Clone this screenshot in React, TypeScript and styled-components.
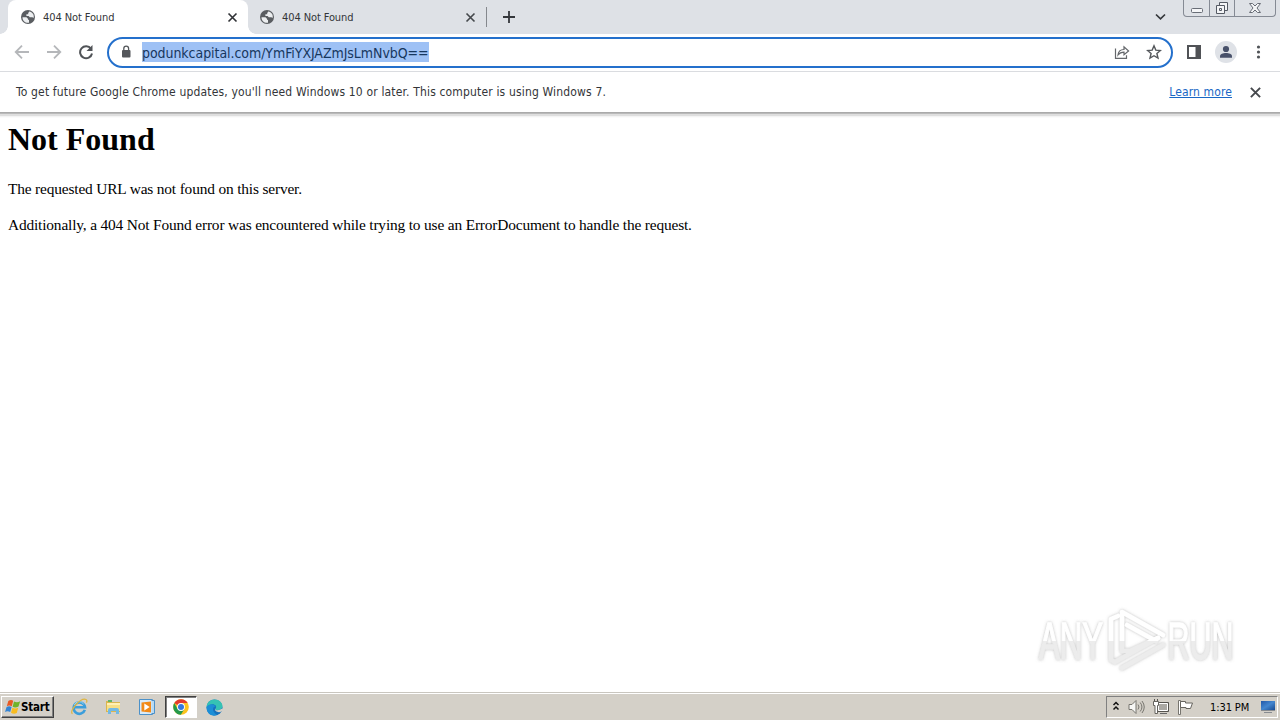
import React from "react";
import styled, { createGlobalStyle } from "styled-components";

const Global = createGlobalStyle`
  * { box-sizing: border-box; }
  body { margin: 0; background: #fff; overflow: hidden; }
  svg { display: block; flex: none; }
`;

const uiFont = `"DejaVu Sans Condensed", "DejaVu Sans", Tahoma, sans-serif`;

const Screen = styled.div`
  width: 1280px; height: 720px; display: flex; flex-direction: column;
  overflow: hidden; background: #fff; font-family: ${uiFont}; color: #3c4043;
`;

const Label = styled.span<{ $size?: number; $spacing?: number; $color?: string }>`
  font-size: ${p => p.$size ?? 12}px;
  letter-spacing: ${p => p.$spacing ?? 0}px;
  color: ${p => p.$color ?? "#333538"};
  white-space: pre;
`;

const TabStrip = styled.div`
  height: 34px; flex: none; background: #dee1e6; display: flex; padding-left: 8px;
`;
const Tab = styled.div<{ $active?: boolean }>`
  width: ${p => (p.$active ? 240 : 238)}px; height: 34px; display: flex; align-items: center;
  padding: ${p => (p.$active ? "0 9px 0 12px" : "0 9px 0 11px")}; gap: 7px; position: relative;
  background: ${p => (p.$active ? "#fff" : "transparent")};
  border-radius: 8px 8px 0 0;
  &::before, &::after {
    content: ""; display: ${p => (p.$active ? "block" : "none")};
    position: absolute; bottom: 0; width: 8px; height: 8px;
  }
  &::before { left: -8px; background: radial-gradient(circle at 0 0, transparent 7.5px, #fff 8px); }
  &::after { right: -8px; background: radial-gradient(circle at 100% 0, transparent 7.5px, #fff 8px); }
`;
const Grow = styled.div`flex: 1;`;
const Divider = styled.div`width: 1px; height: 20px; margin-top: 7px; background: #85888d;`;
const NewTab = styled.div`padding: 11px 0 0 16px;`;
const TabMenu = styled.div`padding: 13px 17px 0 0;`;
const WindowButtons = styled.div`
  display: flex; height: 17px; width: 93px; margin-right: 4px; border: 1px solid #858a94;
  border-top: 0; border-radius: 0 0 4px 4px; overflow: hidden;
`;
const WindowButton = styled.div<{ $width: number }>`
  width: ${p => p.$width}px; display: flex; justify-content: center; padding-top: 1px;
  & + & { border-left: 1px solid #858a94; }
`;

const Toolbar = styled.div`
  height: 38px; flex: none; display: flex; align-items: center; padding: 0 13px 1px 14px;
  border-bottom: 1px solid #dadce0;
`;
const NavButtons = styled.div`display: flex; gap: 16px; width: 93px;`;
const AddressBar = styled.div`
  width: 1066px; height: 31px; border: 2px solid #2470cc; border-radius: 16px;
  display: flex; align-items: center; padding: 0 9px 0 9px;
`;
const Selection = styled.div`
  margin-left: 8px; width: 287px; height: 20px; padding-top: 1px; background: #9ec1f5;
  display: flex; align-items: center;
`;
const AddressActions = styled.div`display: flex; gap: 16px;`;
const ToolbarActions = styled.div`display: flex; align-items: center; margin-left: 13px; gap: 13px;`;

const InfoBar = styled.div`
  height: 40px; flex: none; display: flex; align-items: center; padding: 0 17px 0 16px;
`;
const Link = styled.a`
  font-size: 12px; color: #1967c5; text-decoration: underline; text-underline-offset: 1px;
  margin-right: 16px; letter-spacing: 0.12px;
`;
const InfoShadow = styled.div`
  height: 6px; flex: none;
  background: linear-gradient(#aaa 0 1px, #b9b9b9 1px 2px, #dedede 2px 4px, #f3f3f3 4px 5px, #fbfbfb 5px);
`;

const Page = styled.main`
  flex: 1; padding: 3px 8px 0; color: #000;
  font-family: "Liberation Serif", "Times New Roman", serif; position: relative;
`;
const Heading = styled.h1`font-size: 32px; line-height: 36px; margin: 0 0 23px;`;
const Paragraph = styled.p`
  font-size: 15.4px; line-height: 18px; margin: 0 0 18px; letter-spacing: -0.165px;
`;
const Watermark = styled.div`position: absolute; left: 1030px; top: 482px;`;

const Taskbar = styled.footer`
  height: 28px; flex: none; background: #d4d0c8; display: flex; align-items: center;
  border-top: 1px solid #c9c6bf; box-shadow: inset 0 1px #fff; padding: 1px 2px 0 1px;
`;
const StartButton = styled.div`
  width: 53px; height: 22px; display: flex; align-items: center; gap: 0; padding-left: 2px;
  border: 1px solid; border-color: #fff #404040 #404040 #fff; box-shadow: inset -1px -1px #808080;
`;
const StartText = styled.span`font: bold 11.5px ${uiFont}; letter-spacing: -0.2px; color: #000;`;
const Launchers = styled.div`display: flex; align-items: center; margin-left: 8px;`;
const Launcher = styled.div<{ $active?: boolean }>`
  width: ${p => (p.$active ? 32 : 34)}px; height: 22px; display: flex; align-items: center; justify-content: center;
  margin-left: ${p => (p.$active ? 1 : 0)}px;
  background: ${p => (p.$active ? "#fff" : "transparent")};
  border: ${p => (p.$active ? "1px solid" : "0")}; border-color: #404040 #fff #fff #404040;
  box-shadow: ${p => (p.$active ? "inset 1px 1px #808080" : "none")};
`;
const Tray = styled.div`
  width: 172px; height: 22px; display: flex; align-items: center; padding: 0 1px 0 5px;
  border: 1px solid; border-color: #808080 #fff #fff #808080;
`;
const TrayIcons = styled.div`display: flex; align-items: center; gap: 8px; width: 98px;`;

const Globe = () => (
  <svg width="16" height="16" viewBox="0 0 16 16">
    <circle cx="8" cy="8" r="7" fill="#5a5d61" />
    <path d="M2.5 8.2h4l1.7 1.7v1.2H9v2.6C5.5 14.3 2.4 12 2.5 8.2Z" fill="#eceef0" />
    <path d="M9 2.4c2 .1 3.7 1.3 4.4 3.2.5 1.2.5 2.4.2 3.5l-1.2-.8H9.8L8.6 7H6.4V5.3h1.8V3.5H9Z" fill="#eceef0" />
  </svg>
);
const Cross = ({ size = 14, color = "#45484c" }: { size?: number; color?: string }) => (
  <svg width={size} height={size} viewBox="0 0 14 14" stroke={color} strokeWidth="1.8">
    <path d="m2.7 2.7 8.6 8.6M11.3 2.7l-8.6 8.6" />
  </svg>
);
const Arrow = ({ forward }: { forward?: boolean }) => (
  <svg width="16" height="16" viewBox="0 0 16 16" fill="none" stroke="#b5b7ba" strokeWidth="1.8">
    <path d={forward ? "M1 8h13M8 1.7 14.3 8 8 14.3" : "M15 8H2M8 1.7 1.7 8 8 14.3"} />
  </svg>
);
const Reload = () => (
  <svg width="16" height="16" viewBox="0 0 16 16">
    <path d="M13 4.8A6 6 0 1 0 14 9.5" fill="none" stroke="#505357" strokeWidth="2" />
    <path d="M14.5 1v6h-6Z" fill="#505357" />
  </svg>
);
const Lock = () => (
  <svg width="16" height="16" viewBox="0 0 16 16">
    <rect x="4" y="6" width="8.5" height="7.5" rx="1" fill="#54575b" />
    <path d="M5.8 7V4.5a2.4 2.4 0 0 1 4.8 0V7" fill="none" stroke="#54575b" strokeWidth="1.3" />
  </svg>
);
const Share = () => (
  <svg width="16" height="16" viewBox="0 0 16 16" fill="none" stroke="#64676b" strokeWidth="1.2">
    <path d="M1.5 4.5v9.9h11v-3.2M4 11c.3-3.5 2.2-5.5 6-5.5V2.8L14.6 7 10 10.8V8.2C7.3 8.2 5.5 9 4 11Z" />
  </svg>
);
const Star = () => (
  <svg width="16" height="16" viewBox="0 0 16 16" fill="none" stroke="#54575b" strokeWidth="1.4">
    <path d="m8 1.8 1.8 4.3 4.6.4-3.5 3 1.1 4.6L8 11.7l-4 2.4 1.1-4.6-3.5-3 4.6-.4Z" />
  </svg>
);
const SidePanel = () => (
  <svg width="16" height="16" viewBox="0 0 16 16">
    <path d="M1 1h14v14H1Zm2 2v10h6.5V3Z" fill="#505256" fillRule="evenodd" />
  </svg>
);
const Avatar = () => (
  <svg width="22" height="22" viewBox="0 0 22 22">
    <circle cx="11" cy="11" r="11" fill="#dfe2e7" />
    <circle cx="11" cy="8" r="3.1" fill="#48516a" />
    <path d="M5 16.7v-1.5C5 13.1 8 12 11 12s6 1.1 6 3.2v1.5Z" fill="#48516a" />
  </svg>
);
const Kebab = () => (
  <svg width="16" height="16" viewBox="0 0 16 16" fill="#505357">
    <circle cx="8.5" cy="3" r="1.6" /><circle cx="8.5" cy="8" r="1.6" /><circle cx="8.5" cy="13" r="1.6" />
  </svg>
);
const Flag = () => (
  <svg width="17" height="16" viewBox="0 0 17 16">
    <path d="M4.3 2Q7 .2 9.2 1.8L7.8 7.2Q5 5.8 2.8 7.2Z" fill="#e85a24" />
    <path d="M10 2.5q3 1.6 6.2-.2l-1.7 5.3Q11.3 9.4 8.6 7.8Z" fill="#70b32b" />
    <path d="M2.6 8q2.5-1.6 5 0L6.2 13Q3.5 11.5 1 13Z" fill="#3384d4" />
    <path d="M8.4 8.7q2.7 1.6 5.8 0L12.8 14q-3 1.6-5.8-.3Z" fill="#f8bc20" />
  </svg>
);
const Explorer = () => (
  <svg width="18" height="18" viewBox="0 0 18 18" fill="none">
    <path d="M14.8 11.8A5.7 5.7 0 1 1 15 9.3H5" stroke="#3c9edb" strokeWidth="2.6" />
    <path d="M13.6 6A5.2 5.2 0 0 0 4.3 7.1" stroke="#9bdcf7" strokeWidth="1" />
    <path d="M2.5 15.8C-1.5 13 11-.8 16 1.5c1.2.6 1 2 .4 3.1" stroke="#dfb53f" strokeWidth="1.2" />
  </svg>
);
const Folder = () => (
  <svg width="18" height="18" viewBox="0 0 18 18">
    <path d="M2 3h5l1 1h8v10H2Z" fill="#d9b64f" /><path d="M4 2h4v2H4Z" fill="#5fb568" />
    <path d="M3 5h13v8H3Z" fill="#f7df86" /><path d="M3 5h13v2H3Z" fill="#fff0b3" />
    <path d="M4 16v-4q0-2 2-2h7q2 0 2 2v4h-3v-3H7v3Z" fill="#72b9e4" />
  </svg>
);
const Media = () => (
  <svg width="18" height="18" viewBox="0 0 18 18">
    <path d="M1.5 1.5h13v15h-13Z" fill="#d8ebfa" stroke="#4c91c9" />
    <path d="M13.5 2.5h3v13h-3" fill="#b8d9f1" stroke="#4c91c9" />
    <path d="M3.5 4.5 13 3.5v11l-9.5-1Z" fill="#f28a18" /><path d="m6.3 5.6 5.4 3.4-5.4 3.4Z" fill="#fff" />
  </svg>
);
const Chrome = () => (
  <svg width="16" height="16" viewBox="0 0 16 16">
    <circle cx="8" cy="8" r="7.8" fill="#fcc31e" />
    <path d="M8 8 1.25 4.1a7.8 7.8 0 0 1 13.5 0H8Z" fill="#e33b2e" />
    <path d="M1.25 4.1a7.8 7.8 0 0 0 6.6 11.7L11.4 10 8 8 4.6 10Z" fill="#25994b" />
    <circle cx="8" cy="8" r="3.9" fill="#fff" /><circle cx="8" cy="8" r="3" fill="#3478df" />
  </svg>
);
const Edge = () => (
  <svg width="17" height="17" viewBox="0 0 17 17">
    <circle cx="8.5" cy="8.5" r="8" fill="#1671bd" />
    <path d="M.6 8.2C.8 3.5 4.2.5 8.5.5c5 0 8 3.7 8 6.6 0 2.7-2.2 4.1-4.9 4.1-1.7 0-2.8-.8-2-1.8C12 6.5 6 2.5.6 8.2Z" fill="#35c2b4" />
    <path d="M.6 8.2C3 3.8 8.5 5 9.6 7.6 6.2 7.4 5.6 13 11 15.9 5 18.5.2 13.7.6 8.2Z" fill="#1c8ed6" />
    <path d="M9.6 9.4c-.8 1 .3 1.8 2 1.8 1.6 0 3-.5 4-1.4l1.4.5c-1 3-4.8 4-7.4 1.5-.8-.8-.7-1.8 0-2.4Z" fill="#d4d0c8" />
  </svg>
);
const TrayChevron = () => (
  <svg width="8" height="12" viewBox="0 0 8 12" fill="none" stroke="#111" strokeWidth="1.5">
    <path d="m1.5 4 2.5-2.5L6.5 4M1.5 8.5 4 6l2.5 2.5" />
  </svg>
);
const Speaker = () => (
  <svg width="17" height="16" viewBox="0 0 17 16" fill="none" stroke="#77756f">
    <path d="M1 5.5h3l4-4v13l-4-4H1Z" fill="#f7f7f5" />
    <path d="M10 5.5q2 2.5 0 5M12.2 3.5q3.5 4.5 0 9M14 2q4.5 6 0 12" />
  </svg>
);
const Network = () => (
  <svg width="16" height="16" viewBox="0 0 16 16">
    <path d="M4.5 3.5h11v9h-11Z" fill="#aaa8a3" stroke="#55534e" /><path d="M5.5 4.5h9v7h-9Z" fill="none" stroke="#fff" />
    <path d="M7 14.5h7" stroke="#666" /><path d="M.5 2.5h5v4h-1v8H2v-8H.5Z" fill="#fff" stroke="#66645f" />
    <path d="M1.5 0v2M4.5 0v2" stroke="#55534e" />
  </svg>
);
const ActionFlag = () => (
  <svg width="17" height="16" viewBox="0 0 17 16">
    <path d="M1.5 1.5h2v14h-2Z" fill="#fff" stroke="#77756f" />
    <path d="M3.5 2.5h5V4h7l-2 5.5H9V8.5H3.5Z" fill="#fff" stroke="#66645f" />
  </svg>
);
const Desktop = () => (
  <svg width="16" height="14" viewBox="0 0 16 14">
    <defs><linearGradient id="desktop" x2="1" y2="1"><stop stopColor="#2258a7" /><stop offset=".5" stopColor="#4386cf" /><stop offset="1" stopColor="#174a91" /></linearGradient></defs>
    <path d="M1 1h14v9H1Z" fill="url(#desktop)" /><path d="M1 10.5h14M4 12.5h8" stroke="#878b90" />
  </svg>
);
const Brand = () => (
  <svg width="220" height="82" viewBox="0 0 220 82">
    <defs>
      <filter id="soft" x="-10%" y="-15%" width="120%" height="130%"><feDropShadow dx="0" dy="0" stdDeviation="1.8" floodColor="#777" floodOpacity=".5" /></filter>
      <linearGradient id="fade" gradientUnits="userSpaceOnUse" x1="0" y1="0" x2="0" y2="82"><stop offset=".5" stopColor="#fff" /><stop offset=".505" stopColor="#ececec" /></linearGradient>
    </defs>
    <g filter="url(#soft)" fill="url(#fade)" stroke="url(#fade)" fontFamily="Liberation Sans, sans-serif" fontSize="52" strokeWidth="1.3">
      <text x="15" y="59" transform="scale(.6 1)">ANY</text>
      <text x="235" y="59" transform="scale(.585 1)">RUN</text>
      <g fill="none" strokeWidth="4.6" strokeLinejoin="round" strokeLinecap="round">
        <path d="M88 16 81 19v41l4 2 43-24" />
        <path d="M92 51V12l41 23M97 25l29 16M92 68l41-23M92 51l8 0 28-13" />
      </g>
    </g>
  </svg>
);

export default function App() {
  return (
    <Screen>
      <Global />
      <TabStrip>
        <Tab $active><Globe /><Label $size={11} $spacing={-0.1}>404 Not Found</Label><Grow /><Cross size={13} color="#303236" /></Tab>
        <Tab><Globe /><Label $size={11} $spacing={-0.1}>404 Not Found</Label><Grow /><Cross size={13} /></Tab>
        <Divider />
        <NewTab><svg width="12" height="12" stroke="#34373b" strokeWidth="1.8"><path d="M6 0v12M0 6h12" /></svg></NewTab>
        <Grow />
        <TabMenu><svg width="11" height="8" fill="none" stroke="#34373b" strokeWidth="1.7"><path d="m1 1.5 4.5 4.3L10 1.5" /></svg></TabMenu>
        <WindowButtons>
          <WindowButton $width={25}><svg width="14" height="14" fill="#f4f5f7" stroke="#686d76"><rect x="1.5" y="7.5" width="11" height="4" rx="1" /></svg></WindowButton>
          <WindowButton $width={25}><svg width="14" height="14" fill="#f4f5f7" stroke="#555a64"><path d="M4.5 1.5h8v8h-8Z" /><path d="M1.5 4.5h8v8h-8Z" /><path d="M4.5 7.5h2v2h-2Z" /></svg></WindowButton>
          <WindowButton $width={41}><svg width="14" height="14" fill="#f4f5f7" stroke="#686d76"><path d="M1.5 2.5h3L7 5l2.5-2.5h3L9 7l3.5 4.5h-3L7 9l-2.5 2.5h-3L5 7Z" /></svg></WindowButton>
        </WindowButtons>
      </TabStrip>
      <Toolbar>
        <NavButtons><Arrow /><Arrow forward /><Reload /></NavButtons>
        <AddressBar>
          <Lock />
          <Selection><Label $size={14} $spacing={-0.06} $color="#17375e">podunkcapital.com/YmFiYXJAZmJsLmNvbQ==</Label></Selection>
          <Grow />
          <AddressActions><Share /><Star /></AddressActions>
        </AddressBar>
        <ToolbarActions><SidePanel /><Avatar /><Kebab /></ToolbarActions>
      </Toolbar>
      <InfoBar>
        <Label $size={12} $spacing={0.16}>To get future Google Chrome updates, you'll need Windows 10 or later. This computer is using Windows 7.</Label>
        <Grow /><Link>Learn more</Link><Cross size={15} />
      </InfoBar>
      <InfoShadow />
      <Page>
        <Heading>Not Found</Heading>
        <Paragraph>The requested URL was not found on this server.</Paragraph>
        <Paragraph>Additionally, a 404 Not Found error was encountered while trying to use an ErrorDocument to handle the request.</Paragraph>
        <Watermark><Brand /></Watermark>
      </Page>
      <Taskbar>
        <StartButton><Flag /><StartText>Start</StartText></StartButton>
        <Launchers>
          <Launcher><Explorer /></Launcher><Launcher><Folder /></Launcher><Launcher><Media /></Launcher>
          <Launcher $active><Chrome /></Launcher><Launcher><Edge /></Launcher>
        </Launchers>
        <Grow />
        <Tray>
          <TrayIcons><TrayChevron /><Speaker /><Network /><ActionFlag /></TrayIcons>
          <Label $size={11} $spacing={-0.1} $color="#000">1:31 PM</Label>
          <Grow /><Desktop />
        </Tray>
      </Taskbar>
    </Screen>
  );
}
